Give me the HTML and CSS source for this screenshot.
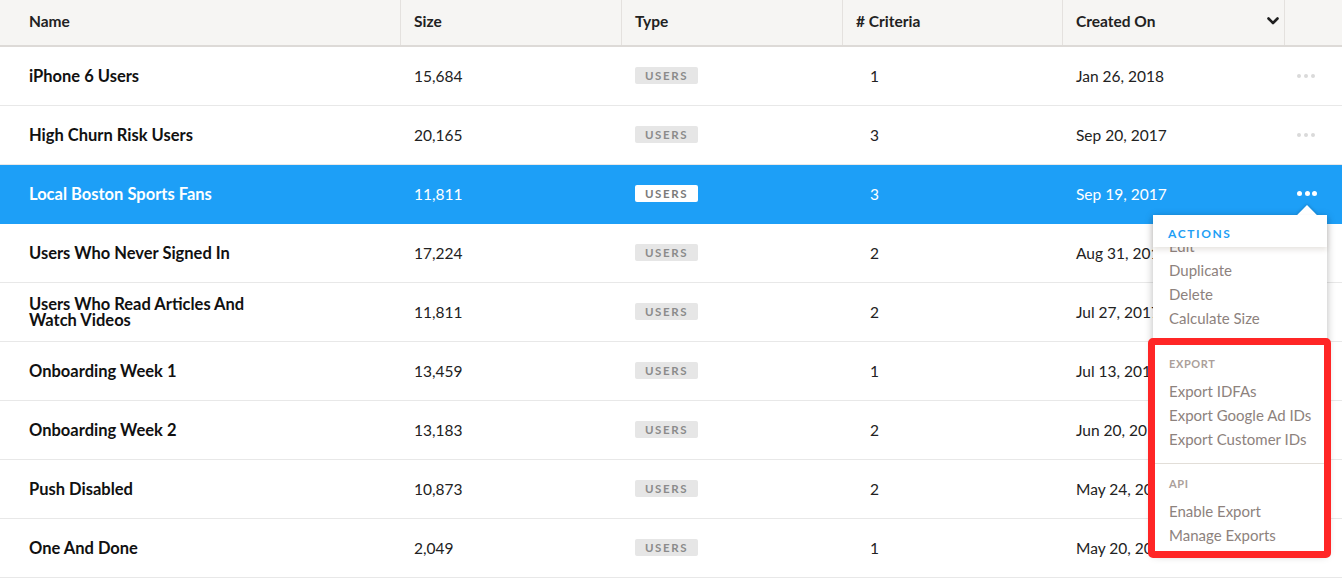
FILE: index.html
```html
<!DOCTYPE html>
<html>
<head>
<meta charset="utf-8">
<link rel="stylesheet" href="styles.css">
</head>
<body>
<div class="page">
  <div class="table">
    <div class="head">
      <div class="hcell name-col">Name</div>
      <div class="hcell">Size</div>
      <div class="hcell">Type</div>
      <div class="hcell">#&nbsp;Criteria</div>
      <div class="hcell sort">Created On
        <svg class="chev" width="12" height="8" viewBox="0 0 12 8"><polyline points="1.5,1.5 6,6 10.5,1.5" fill="none" stroke="#1f1f1f" stroke-width="2.6" stroke-linecap="round" stroke-linejoin="round"/></svg>
      </div>
      <div class="hcell last"></div>
    </div>

    <div class="row">
      <div class="cell name-col"><span class="nm">iPhone 6 Users</span></div>
      <div class="cell">15,684</div>
      <div class="cell"><span class="badge">USERS</span></div>
      <div class="cell crit">1</div>
      <div class="cell">Jan 26, 2018</div>
      <div class="cell dots-cell"><span class="dots"><i></i><i></i><i></i></span></div>
    </div>
    <div class="row">
      <div class="cell name-col"><span class="nm">High Churn Risk Users</span></div>
      <div class="cell">20,165</div>
      <div class="cell"><span class="badge">USERS</span></div>
      <div class="cell crit">3</div>
      <div class="cell">Sep 20, 2017</div>
      <div class="cell dots-cell"><span class="dots"><i></i><i></i><i></i></span></div>
    </div>
    <div class="row selected">
      <div class="cell name-col"><span class="nm">Local Boston Sports Fans</span></div>
      <div class="cell">11,811</div>
      <div class="cell"><span class="badge">USERS</span></div>
      <div class="cell crit">3</div>
      <div class="cell">Sep 19, 2017</div>
      <div class="cell dots-cell"><span class="dots"><i></i><i></i><i></i></span></div>
    </div>
    <div class="row">
      <div class="cell name-col"><span class="nm">Users Who Never Signed In</span></div>
      <div class="cell">17,224</div>
      <div class="cell"><span class="badge">USERS</span></div>
      <div class="cell crit">2</div>
      <div class="cell">Aug 31, 2017</div>
      <div class="cell dots-cell"><span class="dots"><i></i><i></i><i></i></span></div>
    </div>
    <div class="row">
      <div class="cell name-col"><span class="nm">Users Who Read Articles And Watch Videos</span></div>
      <div class="cell">11,811</div>
      <div class="cell"><span class="badge">USERS</span></div>
      <div class="cell crit">2</div>
      <div class="cell">Jul 27, 2017</div>
      <div class="cell dots-cell"><span class="dots"><i></i><i></i><i></i></span></div>
    </div>
    <div class="row">
      <div class="cell name-col"><span class="nm">Onboarding Week 1</span></div>
      <div class="cell">13,459</div>
      <div class="cell"><span class="badge">USERS</span></div>
      <div class="cell crit">1</div>
      <div class="cell">Jul 13, 2017</div>
      <div class="cell dots-cell"><span class="dots"><i></i><i></i><i></i></span></div>
    </div>
    <div class="row">
      <div class="cell name-col"><span class="nm">Onboarding Week 2</span></div>
      <div class="cell">13,183</div>
      <div class="cell"><span class="badge">USERS</span></div>
      <div class="cell crit">2</div>
      <div class="cell">Jun 20, 2017</div>
      <div class="cell dots-cell"><span class="dots"><i></i><i></i><i></i></span></div>
    </div>
    <div class="row">
      <div class="cell name-col"><span class="nm">Push Disabled</span></div>
      <div class="cell">10,873</div>
      <div class="cell"><span class="badge">USERS</span></div>
      <div class="cell crit">2</div>
      <div class="cell">May 24, 2017</div>
      <div class="cell dots-cell"><span class="dots"><i></i><i></i><i></i></span></div>
    </div>
    <div class="row">
      <div class="cell name-col"><span class="nm">One And Done</span></div>
      <div class="cell">2,049</div>
      <div class="cell"><span class="badge">USERS</span></div>
      <div class="cell crit">1</div>
      <div class="cell">May 20, 2017</div>
      <div class="cell dots-cell"><span class="dots"><i></i><i></i><i></i></span></div>
    </div>
  </div>

  <div class="menu">
    <div class="menu-head">ACTIONS</div>
    <div class="menu-body">
      <div class="group first">
        <div class="item">Edit</div>
        <div class="item">Duplicate</div>
        <div class="item">Delete</div>
        <div class="item">Calculate Size</div>
      </div>
      <div class="group">
        <div class="gtitle">EXPORT</div>
        <div class="item">Export IDFAs</div>
        <div class="item">Export Google Ad IDs</div>
        <div class="item">Export Customer IDs</div>
      </div>
      <div class="group api">
        <div class="gtitle">API</div>
        <div class="item">Enable Export</div>
        <div class="item">Manage Exports</div>
      </div>
    </div>
  </div>

  <div class="annot"></div>
</div>
</body>
</html>
```

FILE: styles.css
```css
* { box-sizing: border-box; }
html, body { margin: 0; padding: 0; background: #fff; }
body {
  font-family: "Lato", "Liberation Sans", sans-serif;
  color: #1f1f1f;
  width: 1342px;
  height: 579px;
  overflow: hidden;
}
.page { position: relative; width: 1342px; height: 579px; }

.table { width: 1342px; }
.head, .row {
  display: grid;
  grid-template-columns: 401px 221px 221px 220px 222px 57px;
}
.head {
  height: 47px;
  background: #f6f5f3;
  border-bottom: 2px solid #dddad7;
}
.hcell {
  display: flex;
  align-items: center;
  padding-left: 13px;
  padding-bottom: 3px;
  font-weight: 700;
  font-size: 15.5px;
  color: #222;
  border-right: 1px solid #e4e1de;
}
.hcell.name-col { padding-left: 29px; }
.hcell.last { border-right: none; }
.hcell.sort { justify-content: space-between; padding-right: 5px; }
.chev { display: block; }

.row {
  height: 59px;
  border-bottom: 1px solid #e8e8e8;
}
.cell {
  display: flex;
  align-items: center;
  padding-left: 13px;
  padding-bottom: 1px;
  font-size: 15.5px;
  color: #222;
}
.cell.name-col { padding-left: 29px; }
.nm { font-weight: 700; font-size: 16.5px; max-width: 232px; line-height: 16px; color: #111; }
.cell.crit { padding-left: 27px; }

.badge {
  display: inline-block;
  width: 63px;
  height: 17px;
  line-height: 17px;
  text-align: center;
  background: #e6e6e6;
  color: #8b8b8b;
  font-size: 11.5px;
  font-weight: 700;
  letter-spacing: 1.6px;
  border-radius: 2px;
}

.dots-cell { padding-left: 12px; }
.dots { display: flex; gap: 3px; }
.dots i { width: 4px; height: 4px; border-radius: 50%; background: #dadada; display: block; }

.row.selected { background: #1d9ff7; border-bottom-color: #1d9ff7; }
.row.selected .cell, .row.selected .nm { color: #fff; }
.row.selected .badge { background: #fff; color: #7a7a7a; }
.row.selected .dots { gap: 2.5px; }
.row.selected .dots i { width: 5px; height: 5px; background: #fff; }

/* popup menu */
.menu {
  position: absolute;
  left: 1153px;
  top: 215px;
  width: 174px;
  height: 338px;
  background: #fff;
  box-shadow: 0 2px 8px rgba(0,0,0,0.28);
  border-radius: 2px;
}
.menu::before {
  content: "";
  position: absolute;
  left: 147px;
  top: -7px;
  width: 14px;
  height: 14px;
  background: #fff;
  transform: rotate(45deg);
  box-shadow: -1px -1px 3px rgba(0,0,0,0.15);
}
.menu-head {
  position: relative;
  z-index: 2;
  height: 32px;
  padding: 12px 0 0 15px;
  background: #fff;
  color: #1f9ff5;
  font-size: 12px;
  font-weight: 700;
  letter-spacing: 1.6px;
  line-height: 14px;
  box-shadow: 0 3px 5px rgba(90,70,50,0.14);
}
.menu-body { position: relative; z-index: 1; height: 306px; overflow: hidden; }
.group { padding: 11px 0 12px 16px; border-bottom: 1px solid #e2ded8; }
.group.first { margin-top: -13px; padding-top: 0; padding-bottom: 14px; }
.group.api { border-bottom: none; padding-top: 12px; }
.gtitle {
  color: #ab9f9a;
  font-size: 11px;
  font-weight: 700;
  letter-spacing: 0.6px;
  line-height: 16px;
  margin-bottom: 7px;
}
.item {
  color: #8d827d;
  font-size: 15px;
  line-height: 24px;
  white-space: nowrap;
}

.annot {
  position: absolute;
  left: 1148px;
  top: 338px;
  width: 183px;
  height: 220px;
  border: 7px solid #ff2626;
  border-radius: 5px;
  z-index: 5;
}
```
